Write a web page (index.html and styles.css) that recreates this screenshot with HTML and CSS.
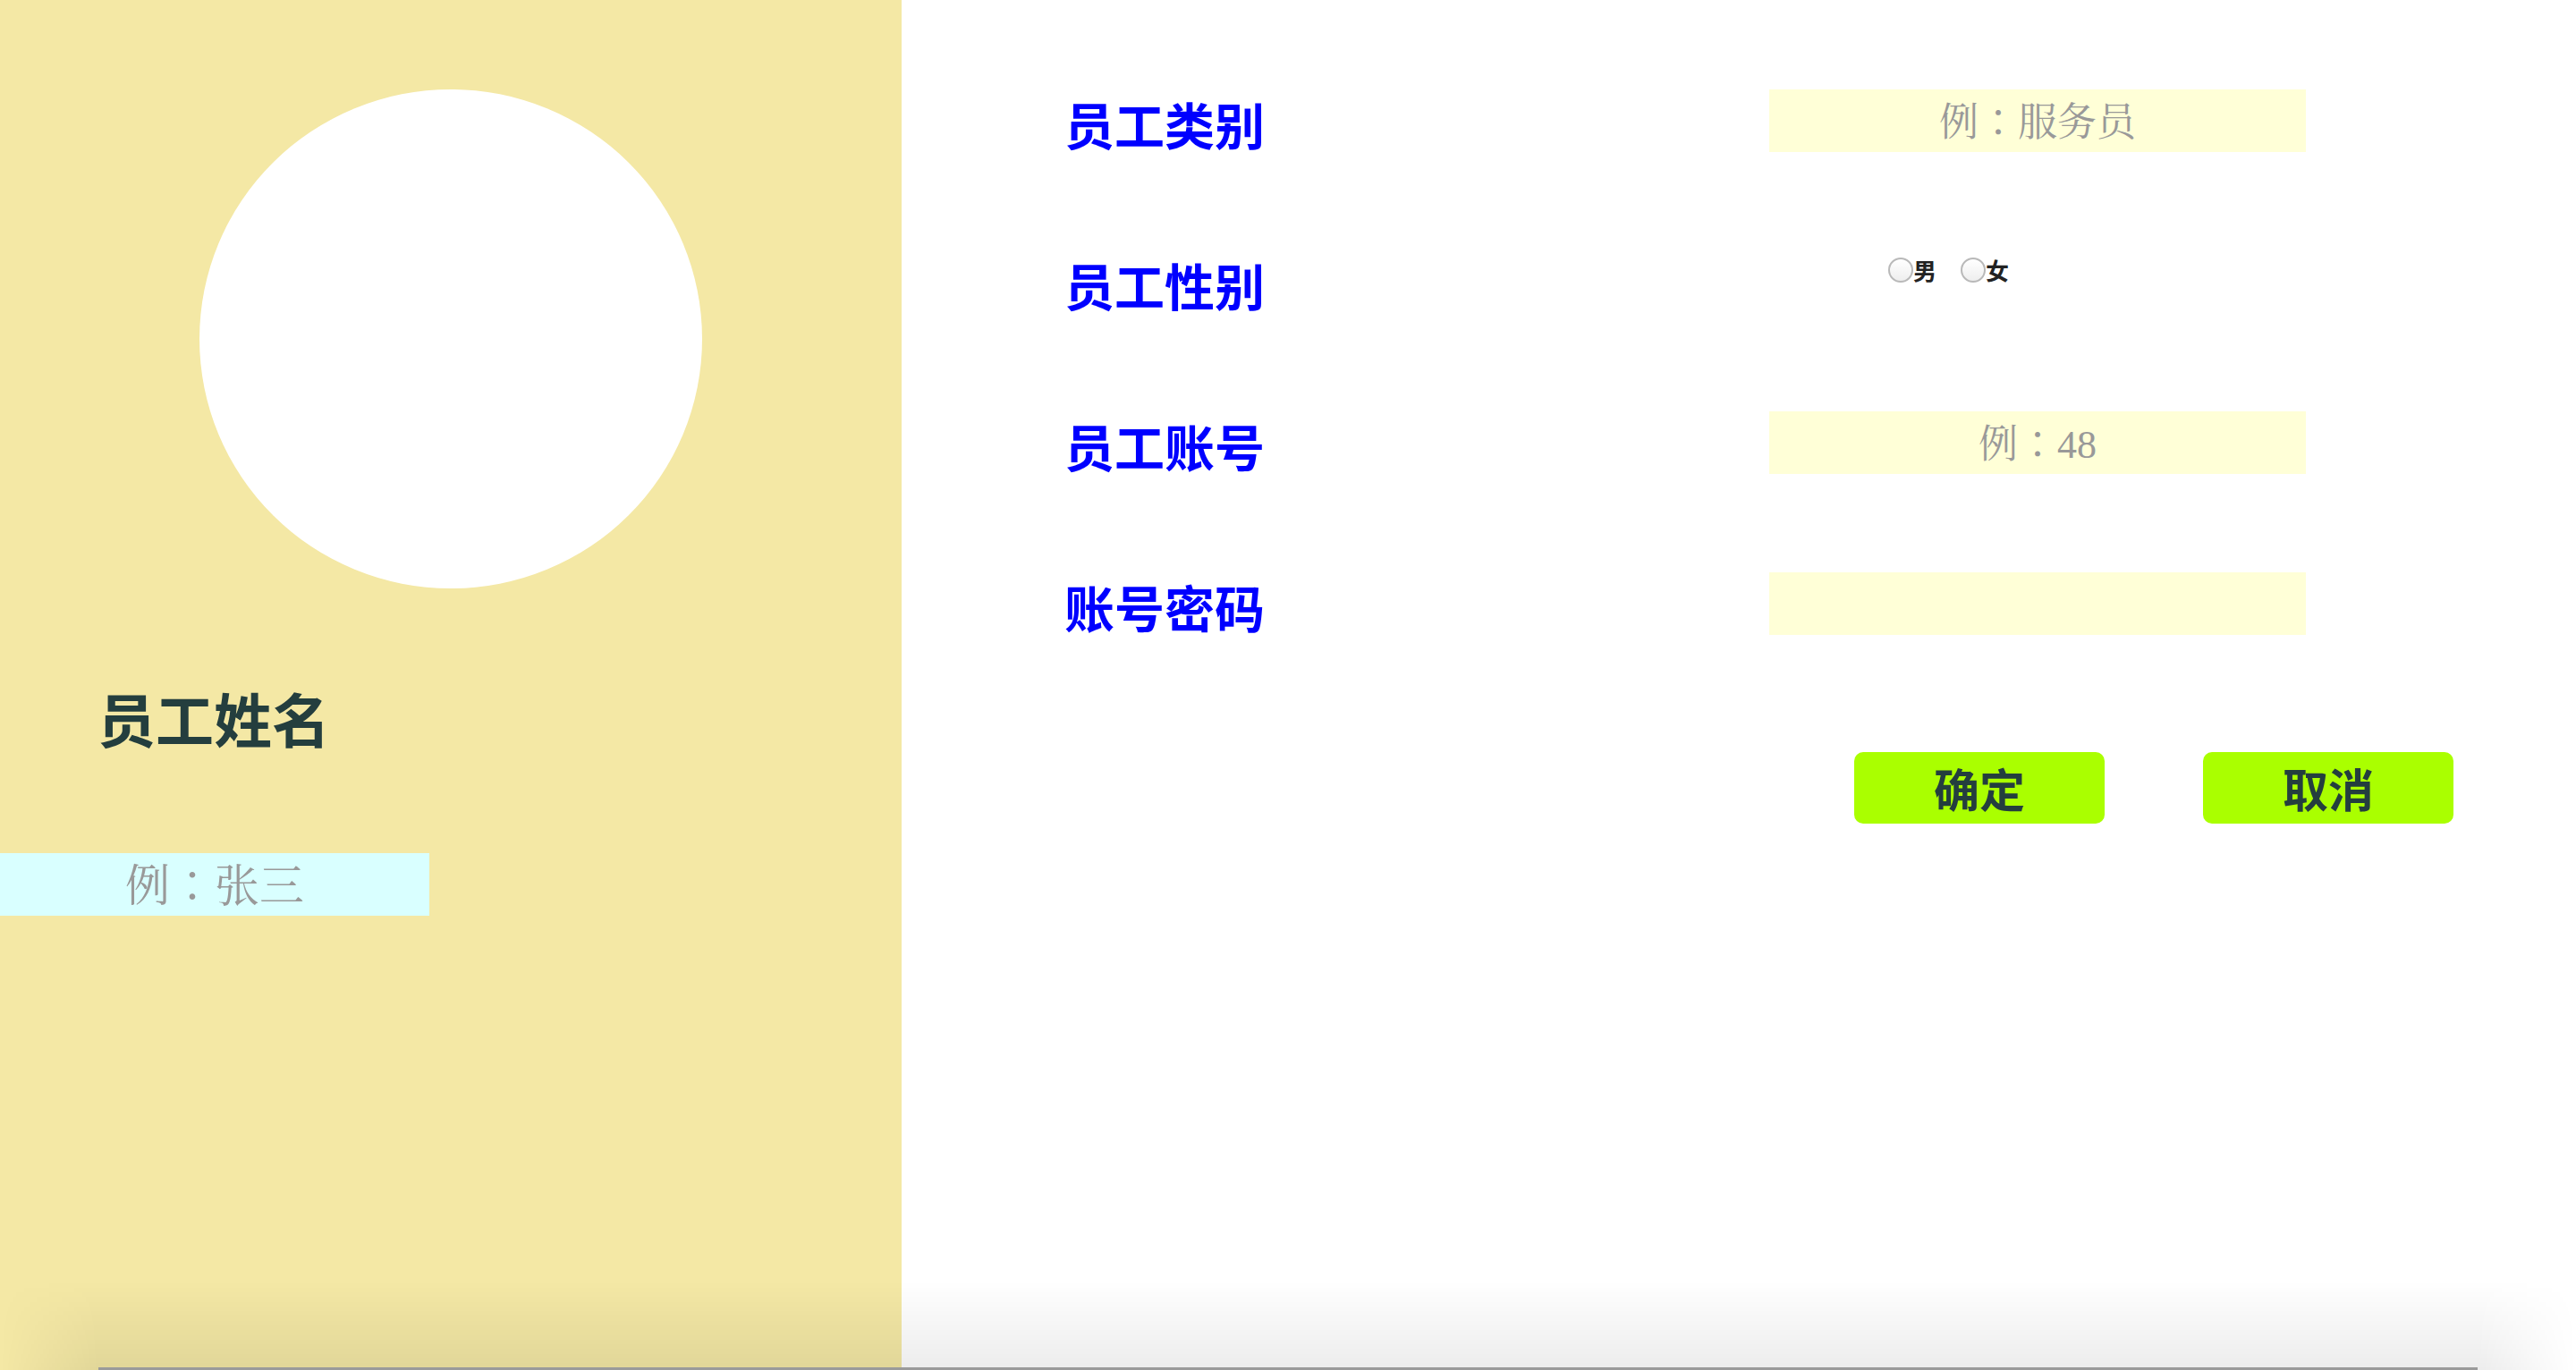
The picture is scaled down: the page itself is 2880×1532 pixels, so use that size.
FILE: index.html
```html
<!DOCTYPE html>
<html lang="zh-CN">
<head>
<meta charset="utf-8">
<title>员工信息</title>
<link rel="stylesheet" href="styles.css">
</head>
<body>
<div class="page">
  <aside class="side">
    <div class="avatar"></div>
    <h2 class="name-title">员工姓名</h2>
    <input class="name-input" lang="ja" type="text" placeholder="例：张三">
  </aside>
  <main class="main">
    <form class="form">
      <div class="grid">
        <label class="label">员工类别</label>
        <input class="field" lang="ja" type="text" placeholder="例：服务员">

        <label class="label">员工性别</label>
        <div class="radios">
          <label class="radio"><input type="radio" name="sex">男</label>
          <label class="radio"><input type="radio" name="sex">女</label>
        </div>

        <label class="label">员工账号</label>
        <input class="field" lang="ja" type="text" placeholder="例：48">

        <label class="label">账号密码</label>
        <input class="field" type="password">
      </div>
      <div class="actions">
        <button type="button" class="btn">确定</button>
        <button type="button" class="btn">取消</button>
      </div>
    </form>
  </main>
  <div class="window-shade"></div>
  <div class="window-edge"></div>
</div>
</body>
</html>
```

FILE: styles.css
```css
html, body {
  margin: 0;
  padding: 0;
  height: 100%;
  background: #ffffff;
}

.page {
  position: relative;
  display: flex;
  height: 1532px;
  overflow: hidden;
  font-family: "Noto Sans CJK SC", "Noto Sans", sans-serif;
}

.side {
  width: 1008px;
  flex: none;
  background: #f4e8a5;
  display: flex;
  flex-direction: column;
  padding-top: 100px;
  box-sizing: border-box;
}

.avatar {
  width: 562px;
  height: 558px;
  border-radius: 50%;
  background: #ffffff;
  align-self: center;
}

.name-title {
  margin: 112px 0 0 0;
  padding-left: 109px;
  font-size: 65px;
  line-height: 65px;
  font-weight: bold;
  color: #243e3e;
}

.name-input {
  margin-top: 119px;
  width: 480px;
  height: 70px;
  box-sizing: border-box;
  border: none;
  outline: none;
  padding: 4px 0 0 0;
  background: #d9ffff;
  text-align: center;
  font-family: "Liberation Serif", "Noto Serif CJK JP", "Noto Sans CJK JP", serif;
  font-size: 50px;
  color: #333;
}

.name-input::placeholder {
  color: #999999;
}

.main {
  flex: 1;
  padding: 100px 0 0 182px;
  box-sizing: border-box;
}

.grid {
  display: grid;
  grid-template-columns: 788px 600px;
  grid-auto-rows: 70px;
  row-gap: 110px;
}

.label {
  align-self: center;
  margin-top: 6px;
  font-size: 56px;
  line-height: 56px;
  font-weight: bold;
  color: #0000ff;
  white-space: nowrap;
}

.field {
  width: 600px;
  height: 70px;
  box-sizing: border-box;
  border: none;
  outline: none;
  padding: 4px 0 0 0;
  background: #ffffd7;
  text-align: center;
  font-family: "Liberation Serif", "Noto Serif CJK JP", "Noto Sans CJK JP", serif;
  font-size: 44px;
  color: #333;
}

.field::placeholder {
  color: #999999;
}

.radios {
  display: flex;
  align-items: center;
  gap: 27px;
  padding-left: 133px;
  margin-top: 8px;
  align-self: start;
  height: 28px;
}

.radio {
  display: flex;
  align-items: center;
  font-size: 26px;
  line-height: 28px;
  font-weight: bold;
  color: #222222;
}

.radio input {
  appearance: none;
  -webkit-appearance: none;
  margin: 0;
  width: 28px;
  height: 28px;
  border-radius: 50%;
  border: 2px solid #b9b9b9;
  background: linear-gradient(#ffffff, #eeeeee);
  box-sizing: border-box;
}

.actions {
  display: flex;
  gap: 110px;
  margin: 131px 0 0 883px;
}

.btn {
  width: 280px;
  height: 80px;
  border: none;
  border-radius: 10px;
  background: #aaff00;
  color: #243e3e;
  font-family: "Noto Sans CJK SC", sans-serif;
  font-size: 51px;
  font-weight: bold;
  line-height: 80px;
  padding: 0;
}

.window-shade {
  position: absolute;
  left: 0;
  right: 0;
  bottom: 0;
  height: 100px;
  background: linear-gradient(rgba(0, 0, 0, 0), rgba(0, 0, 0, 0.075));
  -webkit-mask-image: linear-gradient(to right, transparent 0, #000 110px, #000 calc(100% - 110px), transparent 100%);
  mask-image: linear-gradient(to right, transparent 0, #000 110px, #000 calc(100% - 110px), transparent 100%);
  pointer-events: none;
}

.window-edge {
  position: absolute;
  left: 110px;
  right: 110px;
  bottom: 0;
  height: 3px;
  background: #9a9a9a;
  pointer-events: none;
}
```
